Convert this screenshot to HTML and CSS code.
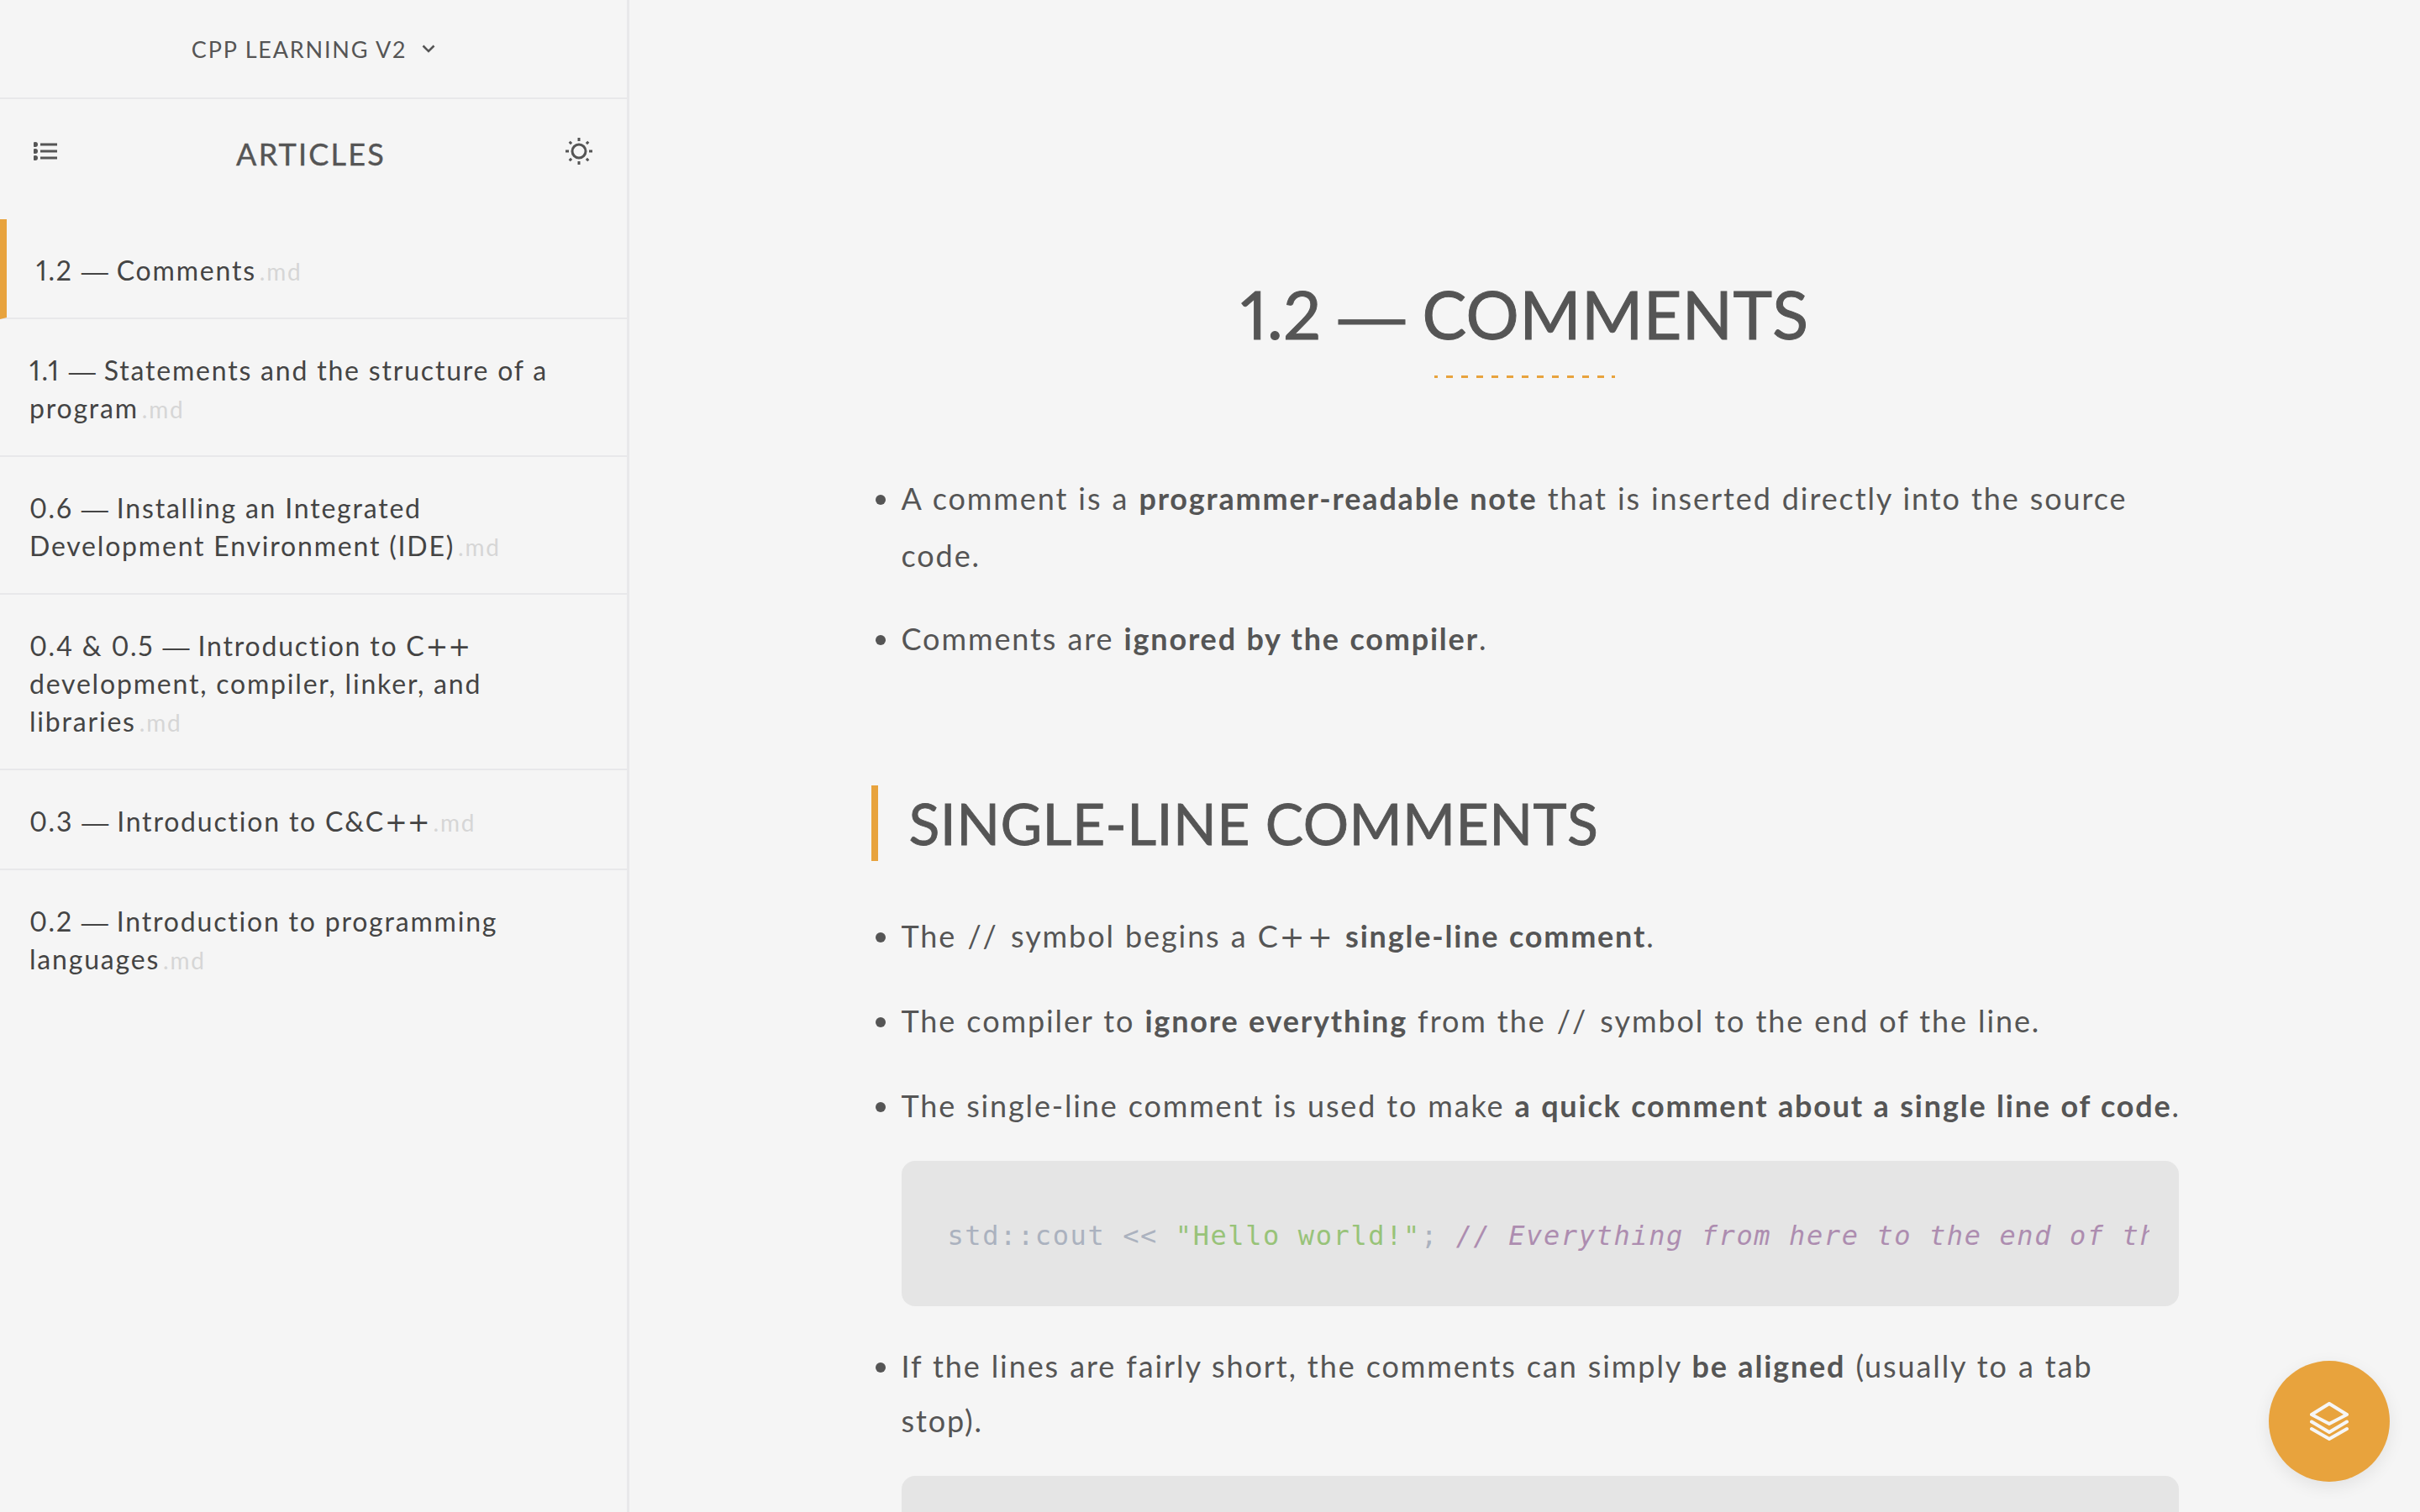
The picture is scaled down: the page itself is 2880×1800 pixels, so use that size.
FILE: index.html
```html
<!DOCTYPE html>
<html lang="en">
<head>
    <meta charset="UTF-8">
    <meta name="viewport" content="width=device-width, initial-scale=1.0">
    <title>1.2 — Comments</title>
    <link rel="stylesheet" href="styles.css">
</head>
<body>

    <aside class="sidebar">
        <div class="project">
            <span>CPP LEARNING V2</span>
            <svg class="chevron" viewBox="0 0 16 10"><path d="M1.5 1.5 8 8l6.500-6.500"/></svg>
        </div>

        <div class="toolbar">
            <svg class="tool-icon" width="28" height="22" viewBox="0 0 28 22">
                <circle cx="2" cy="3" r="1.500"/><circle cx="2" cy="11" r="1.500"/><circle cx="2" cy="19" r="1.500"/>
                <path d="M8 3h20M8 11h20M8 19h20"/>
            </svg>
            <h3>ARTICLES</h3>
            <svg class="tool-icon" width="34" height="34" viewBox="0 0 34 34">
                <circle cx="17" cy="17" r="8" fill="none"/>
                <path d="M17 1v4M17 29v4M1 17h4M29 17h4M5.700 5.700l2.400 2.400M25.900 25.900l2.400 2.400M5.700 28.300l2.400-2.400M25.900 8.100l2.400-2.400"/>
            </svg>
        </div>

        <ul class="articles">
            <li class="active">1.2 <span class="dash">—</span> Comments<span class="ext">.md</span></li>
            <li>1.1 <span class="dash">—</span> Statements and the structure of a program<span class="ext">.md</span></li>
            <li>0.6 <span class="dash">—</span> Installing an Integrated Development Environment (IDE)<span class="ext">.md</span></li>
            <li>0.4 &amp; 0.5 <span class="dash">—</span> Introduction to C<span class="plus">++</span> development, compiler, linker, and libraries<span class="ext">.md</span></li>
            <li>0.3 <span class="dash">—</span> Introduction to C&amp;C<span class="plus">++</span><span class="ext">.md</span></li>
            <li>0.2 <span class="dash">—</span> Introduction to programming languages<span class="ext">.md</span></li>
        </ul>
    </aside>

    <main class="content">
        <div class="page">
            <h1>1.2 <span class="dash">—</span> COMMENTS</h1>
            <div class="title-rule"></div>

            <ul class="notes">
                <li class="tall">A comment is a <b>programmer-readable note</b> that is inserted directly into the source code.</li>
                <li>Comments are <b>ignored by the compiler</b>.</li>
            </ul>

            <h2>SINGLE-LINE COMMENTS</h2>

            <ul class="notes">
                <li>The <span class="slashes">//</span> symbol begins a C<span class="plus">++</span> <b>single-line comment</b>.</li>
                <li>The compiler to <b>ignore everything</b> from the <span class="slashes">//</span> symbol to the end of the line.</li>
                <li class="before-code one-line">The single-line comment is used to make <b>a quick comment about a single line of code</b>.</li>
            </ul>
            <pre class="code"><code>std::cout &lt;&lt; <span class="str">"Hello world!"</span>; <span class="cmt">// Everything from here to the end of this line is ignored</span></code></pre>

            <ul class="notes">
                <li class="before-code">If the lines are fairly short, the comments can simply <b>be aligned</b> (usually to a tab stop).</li>
            </ul>
            <pre class="code"><code>std::cout &lt;&lt; <span class="str">"Hello world!\n"</span>; <span class="cmt">// std::cout lives in the iostream library</span></code></pre>
        </div>
    </main>

    <button class="fab" type="button">
        <svg width="46" height="46" viewBox="0 0 46 46">
            <path d="M23 2 44 15 23 26 2 15Z"/>
            <path d="M2 23.500 23 36 44 23.500"/>
            <path d="M2 32 23 44 44 32"/>
        </svg>
    </button>

</body>
</html>
```

FILE: styles.css
```css
* {
    box-sizing: border-box;
}

html, body {
    height: 100%;
}

body {
    margin: 0;
    display: flex;
    overflow: hidden;
    background: #f5f5f5;
    color: #555;
    font-family: 'Lato', sans-serif;
    font-variant-numeric: proportional-nums;
}

.dash {
    font-family: 'Liberation Sans', sans-serif;
    line-height: 0;
    letter-spacing: 0;
}

.plus {
    font-family: 'DejaVu Sans', sans-serif;
    line-height: 0;
    letter-spacing: 0;
}

/* sidebar */

.sidebar {
    width: 749px;
    flex-shrink: 0;
    border-right: 3px solid #e8e8ea;
}

.project {
    height: 118px;
    display: flex;
    align-items: center;
    justify-content: center;
    gap: 18px;
    border-bottom: 2px solid #e8e8ea;
    font-size: 27px;
    letter-spacing: 1.8px;
}

.chevron {
    width: 16px;
    height: 10px;
    fill: none;
    stroke: #555;
    stroke-width: 2.5;
}

.toolbar {
    height: 130px;
    margin-bottom: 13px;
    padding: 0 40px;
    display: flex;
    align-items: center;
    justify-content: space-between;
}

.toolbar h3 {
    margin: 0;
    font-size: 36px;
    font-weight: 400;
    letter-spacing: 2.2px;
    -webkit-text-stroke: 0.4px #555;
}

.tool-icon {
    margin-bottom: 6px;
    fill: #555;
    stroke: #555;
    stroke-width: 3;
}

.articles {
    margin: 0;
    padding: 0;
    list-style: none;
}

.articles li {
    padding: 38px 50px 34px 35px;
    border-bottom: 2px solid #e8e8ea;
    font-size: 32px;
    line-height: 45px;
    letter-spacing: 1.8px;
    color: #444;
}

.articles li:last-child {
    border-bottom: none;
}

.articles li.active {
    border-left: 8px solid #e8a33d;
}

.ext {
    margin-left: 4px;
    font-size: 28px;
    line-height: 0;
    color: #d6d6d6;
}

/* article */

.content {
    flex: 1;
    display: flex;
    justify-content: center;
}

.page {
    width: 1556px;
    padding-top: 326px;
}

h1 {
    margin: 0;
    text-align: center;
    font-size: 79px;
    line-height: 96px;
    font-weight: 400;
    letter-spacing: 0.4px;
    -webkit-text-stroke: 1px #555;
}

.title-rule {
    width: 215px;
    height: 3px;
    margin: 25px auto 109px;
    background: repeating-linear-gradient(90deg, #e8a33d 0, #e8a33d 8px, transparent 8px, transparent 18px) -4px 0;
}

h2 {
    margin: 142px 0 57px;
    padding-left: 37px;
    border-left: 8px solid #e8a33d;
    font-size: 68px;
    line-height: 90px;
    font-weight: 400;
    letter-spacing: 0.4px;
    -webkit-text-stroke: 0.8px #555;
}

.notes {
    margin: 0 -3px 0 0;
    padding-left: 36px;
    font-size: 36px;
    line-height: 65px;
    letter-spacing: 1.9px;
    word-spacing: 1px;
}

.notes li {
    margin-bottom: 36px;
}

.notes li.tall {
    line-height: 68px;
    margin-bottom: 33px;
}

.notes li.before-code {
    margin-bottom: 0;
}

.notes li.one-line {
    white-space: nowrap;
    letter-spacing: 1.85px;
}

.notes b {
    font-weight: 700;
    letter-spacing: 1.8px;
}

.notes .plus {
    letter-spacing: 3px;
}

.slashes {
    margin: 0 -5px 0 1px;
    letter-spacing: 10px;
}

.code {
    margin: 33px 0 39px 36px;
    padding: 67px 35px 61px 55px;
    height: 173px;
    background: #e5e5e5;
    border-radius: 16px;
    font-family: 'DejaVu Sans Mono', monospace;
    font-size: 32px;
    line-height: 45px;
    letter-spacing: 1.6px;
    color: #abb2bf;
}

.code code {
    display: block;
    overflow: hidden;
    font-family: inherit;
}

.str {
    color: #98c379;
}

.cmt {
    font-style: italic;
    color: #ad8db0;
}

/* floating button */

.fab {
    position: absolute;
    right: 36px;
    bottom: 36px;
    width: 144px;
    height: 144px;
    padding: 0;
    display: flex;
    align-items: center;
    justify-content: center;
    border: none;
    border-radius: 50%;
    background: #e8a33d;
    box-shadow: 0 6px 20px rgba(0, 0, 0, 0.08);
}

.fab svg {
    fill: none;
    stroke: #f6f6f6;
    stroke-width: 4;
    stroke-linejoin: round;
    stroke-linecap: round;
}
```
